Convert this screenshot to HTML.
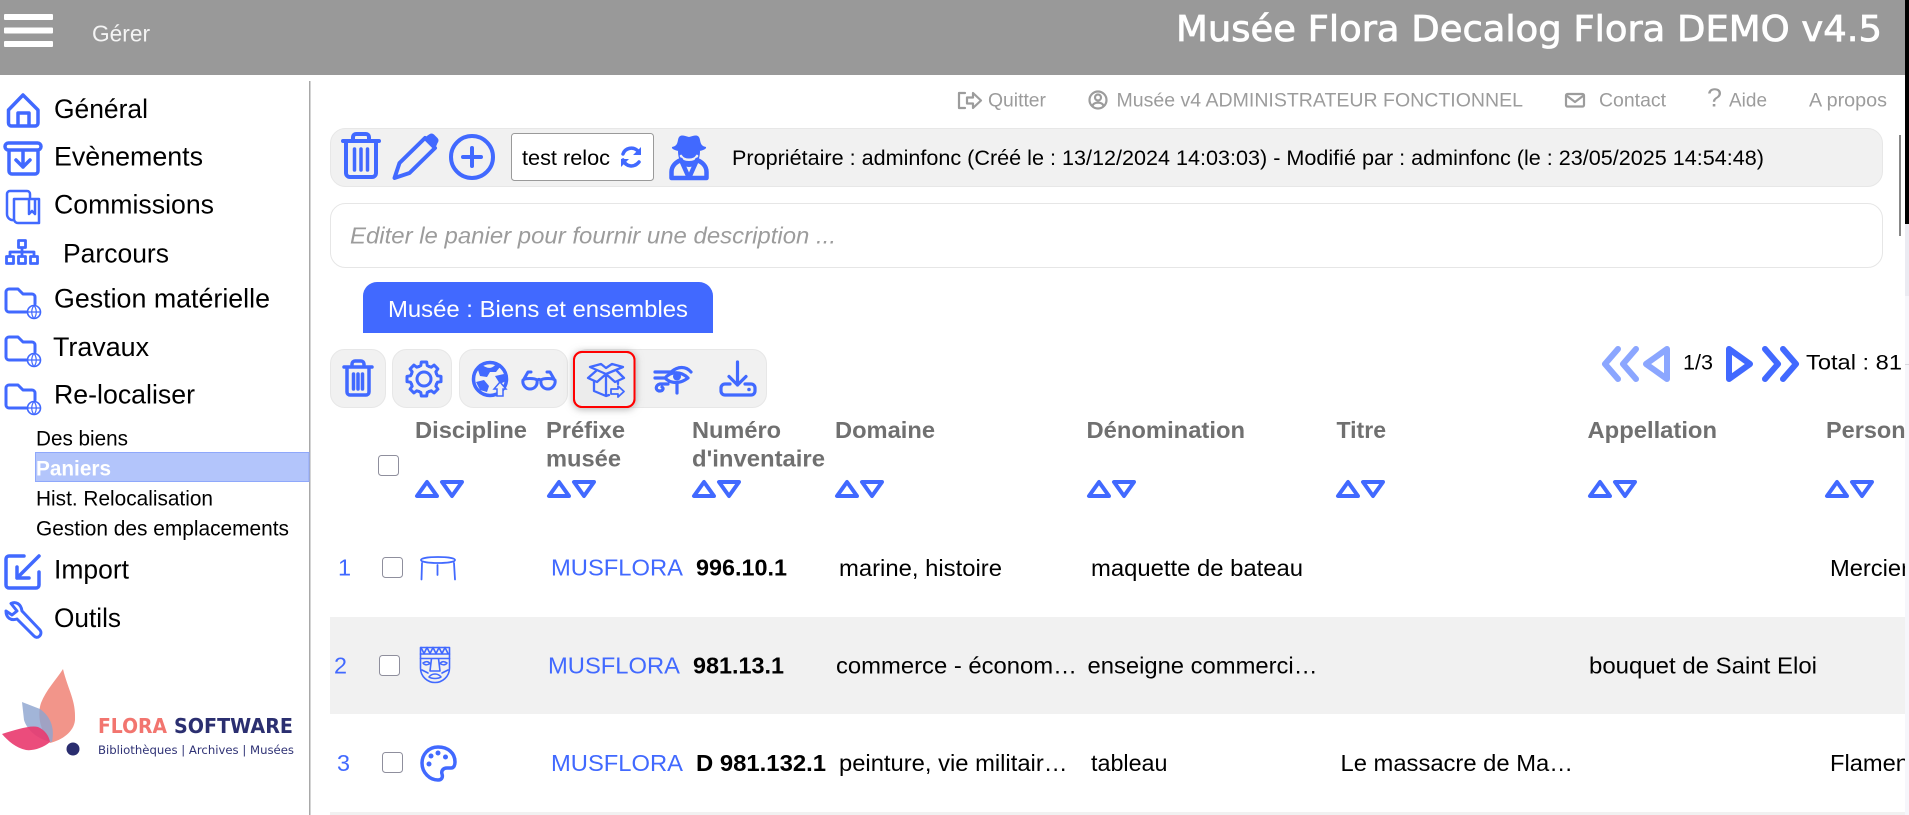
<!DOCTYPE html>
<html lang="fr">
<head>
<meta charset="utf-8">
<title>Musée Flora Decalog Flora DEMO v4.5</title>
<style>
html,body{margin:0;padding:0;width:1909px;height:815px;overflow:hidden;background:#fff}
svg{display:block}
text{font-family:"Liberation Sans",Arial,sans-serif;white-space:pre}
.s{font-size:26.67px;fill:#000}
.m{font-size:21px;fill:#000}
.l{font-size:19.5px;fill:#9c9c9c}
.h{font-size:23.5px;font-weight:bold;fill:#707070}
.c{font-size:23.5px;fill:#000}
.b{font-size:23.5px;fill:#4169ff}
.n{font-size:23.5px;font-weight:bold;fill:#000}
.s,.h,.c,.b,.n{transform:translate(-1px,.6px)}
.i{fill:none;stroke:#4169ff;stroke-linecap:round;stroke-linejoin:round}
.g{fill:none;stroke:#9c9c9c;stroke-linecap:round;stroke-linejoin:round;stroke-width:2.2}
.cb{fill:#fff;stroke:#8f8f9d;stroke-width:1}
</style>
</head>
<body>
<svg xmlns="http://www.w3.org/2000/svg" width="1909" height="815" viewBox="0 0 1909 815">
<defs>
<filter id="sh" x="-30%" y="-30%" width="160%" height="160%"><feDropShadow dx="0" dy="1" stdDeviation="4" flood-color="#888" flood-opacity=".7"/></filter>
<g id="fold" class="i" stroke-width="3">
<path d="M27 312H9a3 3 0 0 1-3-3V292a3 3 0 0 1 3-3H18l5 5H32a3 3 0 0 1 3 3V304"/>
<circle cx="34" cy="312" r="6.500" stroke-width="1.600"/>
<path d="M27.500 312H40.500M34 305.500C31 309 31 315 34 318.500C37 315 37 309 34 305.500" stroke-width="1.200"/>
</g>
<g id="sort" class="i" stroke-width="4">
<path d="M12 2L2 16H22Z"/><path d="M27 2H47L37 16Z"/>
</g>
<g id="tooth"><path d="M-5.170-12.470L-3.200-13.500L-2.700-17H2.700L3.200-13.500L5.170-12.470"/></g>
</defs>

<!-- header -->
<rect x="0" y="0" width="1909" height="75" fill="#999"/>
<rect x="4" y="14" width="49" height="6" rx="1" fill="#fff"/>
<rect x="4" y="27.500" width="49" height="6" rx="1" fill="#fff"/>
<rect x="4" y="41" width="49" height="6" rx="1" fill="#fff"/>
<text x="92" y="41.500" font-size="23" fill="#f4f4f4" textLength="58" lengthAdjust="spacingAndGlyphs">Gérer</text>
<text x="1176" y="41" fill="#fff" stroke="#fff" stroke-width=".8" font-size="36" style="font-family:'DejaVu Sans',sans-serif" textLength="706" lengthAdjust="spacingAndGlyphs">Musée Flora Decalog Flora DEMO v4.5</text>

<!-- sidebar -->
<rect x="309" y="81" width="1.500" height="734" fill="#a8a8a8"/>
<text class="s" x="55" y="117.300" textLength="94" lengthAdjust="spacingAndGlyphs">Général</text>
<text class="s" x="55" y="165" textLength="149" lengthAdjust="spacingAndGlyphs">Evènements</text>
<text class="s" x="55" y="213" textLength="160" lengthAdjust="spacingAndGlyphs">Commissions</text>
<text class="s" x="64" y="262" textLength="106" lengthAdjust="spacingAndGlyphs">Parcours</text>
<text class="s" x="55" y="307" textLength="216" lengthAdjust="spacingAndGlyphs">Gestion matérielle</text>
<text class="s" x="54" y="355.500" textLength="96" lengthAdjust="spacingAndGlyphs">Travaux</text>
<text class="s" x="55" y="403" textLength="141" lengthAdjust="spacingAndGlyphs">Re-localiser</text>
<text class="m" x="36" y="445.700" textLength="92" lengthAdjust="spacingAndGlyphs">Des biens</text>
<rect x="35.500" y="452.500" width="273.500" height="29" fill="#b3c5fb" stroke="#8fa8fb" stroke-width="1"/>
<text class="m" x="36" y="475.700" font-weight="bold" style="fill:#fff" textLength="75" lengthAdjust="spacingAndGlyphs">Paniers</text>
<text class="m" x="36" y="505.700" textLength="177" lengthAdjust="spacingAndGlyphs">Hist. Relocalisation</text>
<text class="m" x="36" y="535.700" textLength="253" lengthAdjust="spacingAndGlyphs">Gestion des emplacements</text>
<text class="s" x="55" y="578" textLength="75" lengthAdjust="spacingAndGlyphs">Import</text>
<text class="s" x="55" y="626.500" textLength="67" lengthAdjust="spacingAndGlyphs">Outils</text>

<!-- sidebar icons -->
<path class="i" stroke-width="3.500" d="M8.500 110L23 95L38 110V123a3 3 0 0 1-3 3H11.500a3 3 0 0 1-3-3ZM18 126V113H29V126"/>
<path class="i" stroke-width="3.500" d="M8.500 143H37.500a2.500 2.500 0 0 1 0 7H8.500a2.500 2.500 0 0 1 0-7ZM9 150V171a3 3 0 0 0 3 3H35a3 3 0 0 0 3-3V150M23 152V167M16 160L23 167L30 160"/>
<path class="i" stroke-width="2.500" d="M14 220a6 6 0 0 1-7-6V194a3 3 0 0 1 3-3H27a3 3 0 0 1 3 3V199M14 199H39V223H18a4 4 0 0 1-4-4ZM29 199V214L32 211L35 214V199"/>
<path class="i" stroke-width="2.800" d="M18.500 240.500H25.500V247.500H18.500ZM22 247.500V252M10 256V252H34V256M6.500 256.500H13.500V263.500H6.500ZM18.500 256.500H25.500V263.500H18.500ZM30.500 256.500H37.500V263.500H30.500ZM22 252V256"/>
<use href="#fold"/>
<use href="#fold" y="48"/>
<use href="#fold" y="96"/>
<path class="i" stroke-width="3.500" d="M24 556H9a3 3 0 0 0-3 3V585a3 3 0 0 0 3 3H36a3 3 0 0 0 3-3V572M39 556L17 578M17 567V578H29"/>
<path class="i" stroke-width="3" d="M11 603.500C16 601 21 604 22 611L40 630C43 634 38 640 34 636L17 619C11 621 6 618 6 611L12 615L17 611Z"/>

<!-- logo -->
<path d="M63 669C68 690 76 700 75 720C74 732 62 740 50 743C40 730 37 715 41 703C46 690 56 680 63 669Z" fill="#f2958a"/>
<path d="M22 702L40 709C50 716 55 727 52 742C38 740 27 730 24 720Z" fill="#8ea5d0" opacity=".82"/>
<path d="M2 734C15 730 30 725 38 727C45 730 49 736 50 742C43 748 33 751 26 750C16 748 8 741 2 734Z" fill="#e9386e" opacity=".9"/>
<circle cx="73" cy="749" r="6.500" fill="#2a2d6f"/>
<text x="98" y="733" font-size="20.500" font-weight="bold" fill="#f2756f" style="font-family:'DejaVu Sans',sans-serif" textLength="69" lengthAdjust="spacingAndGlyphs">FLORA</text>
<text x="174" y="733" font-size="20.500" font-weight="bold" fill="#2b2f70" style="font-family:'DejaVu Sans',sans-serif" textLength="119" lengthAdjust="spacingAndGlyphs">SOFTWARE</text>
<text x="98" y="754" font-size="11.500" fill="#2f3275" style="font-family:'DejaVu Sans',sans-serif" textLength="196" lengthAdjust="spacingAndGlyphs">Bibliothèques | Archives | Musées</text>

<!-- top links -->
<path class="g" d="M965 93H959V108H965M967 97.500H973V93L981 100.500L973 108V103.500H967Z"/>
<text class="l" x="988" y="106.700" textLength="58" lengthAdjust="spacingAndGlyphs">Quitter</text>
<circle class="g" cx="1098" cy="100" r="8.500"/>
<circle class="g" cx="1098" cy="97.500" r="3"/>
<path class="g" d="M1092.500 106C1093.500 101.500 1102.500 101.500 1103.500 106"/>
<text class="l" x="1116.500" y="106.700" textLength="406.500" lengthAdjust="spacingAndGlyphs">Musée v4 ADMINISTRATEUR FONCTIONNEL</text>
<rect class="g" x="1566" y="94" width="18" height="12.500" rx="1.500"/>
<path class="g" d="M1566.500 95.500L1575 102L1583.500 95.500"/>
<text class="l" x="1599" y="106.700" textLength="67" lengthAdjust="spacingAndGlyphs">Contact</text>
<text class="l" x="1707" y="106.700" style="font-size:26px" textLength="15" lengthAdjust="spacingAndGlyphs">?</text>
<text class="l" x="1729" y="106.700" textLength="38" lengthAdjust="spacingAndGlyphs">Aide</text>
<text class="l" x="1809" y="106.700" textLength="78" lengthAdjust="spacingAndGlyphs">A propos</text>

<!-- top toolbar -->
<rect x="330.500" y="128.500" width="1552" height="58" rx="15" fill="#f1f1f1" stroke="#e7e7e7"/>
<path class="i" stroke-width="4" d="M343 141H379M353 140V137a3 3 0 0 1 3-3H366a3 3 0 0 1 3 3V140M346 142V173a4 4 0 0 0 4 4H372a4 4 0 0 0 4-4V142"/>
<path class="i" stroke-width="3.500" d="M354.500 149V170M361 149V170M367.500 149V170"/>
<path class="i" stroke-width="4" d="M394.500 178L399.500 163L425 138L435 148L409.500 173Z"/>
<path d="M424 138L429 134.500a4 4 0 0 1 5 0L437.500 138a4 4 0 0 1 0 5L435 149Z" fill="#4169ff"/>
<circle class="i" stroke-width="4" cx="472" cy="157" r="21"/>
<path class="i" stroke-width="4" d="M472 148V166M463 157H481"/>
<rect x="511.500" y="133.500" width="142" height="47" rx="3" fill="#fff" stroke="#9a9a9a"/>
<text x="522" y="165" font-size="21.300" fill="#000" textLength="88" lengthAdjust="spacingAndGlyphs">test reloc</text>
<path class="i" stroke-width="3.500" d="M623 154C625 148 633 146 638 151M623 160C626 167 634 168 639 162"/>
<path d="M641 147V155H633ZM621 167V159H629Z" fill="#4169ff"/>
<path d="M672 147C676 146 677 145 678 140C679 134 683 135 689 137C695 135 699 134 700 140C701 145 702 146 706 147C707 150 698 152 689 152C680 152 671 150 672 147Z" fill="#4169ff"/>
<path d="M678 151H700C700 161 695 167 689 167C683 167 678 161 678 151Z" fill="#4169ff"/>
<path d="M681 156C684 161 694 161 697 156" fill="none" stroke="#f1f1f1" stroke-width="2.500" stroke-linecap="round"/>
<path class="i" stroke-width="4.500" d="M671.500 178V172C671.500 166 676 162 681 160L689 178ZM706.500 178V172C706.500 166 702 162 697 160L689 178ZM671.500 178H706.500"/>

<!-- description -->
<rect x="330.500" y="203.500" width="1552" height="64" rx="15" fill="#fff" stroke="#e6e6e6"/>
<text x="350" y="243.600" font-size="23" font-style="italic" fill="#9c9c9c" textLength="486" lengthAdjust="spacingAndGlyphs">Editer le panier pour fournir une description ...</text>
<text x="732" y="165" font-size="21.300" fill="#000" textLength="1032" lengthAdjust="spacingAndGlyphs">Propriétaire : adminfonc (Créé le : 13/12/2024 14:03:03) - Modifié par : adminfonc (le : 23/05/2025 14:54:48)</text>

<!-- tab -->
<path d="M363 333V296a14 14 0 0 1 14-14H699a14 14 0 0 1 14 14V333Z" fill="#4169ff"/>
<text x="388" y="317" font-size="23" fill="#fff" textLength="300" lengthAdjust="spacingAndGlyphs">Musée : Biens et ensembles</text>

<!-- action toolbar -->
<rect x="330.500" y="349.500" width="55" height="58" rx="14" fill="#f1f1f1" stroke="#e7e7e7"/>
<rect x="392.500" y="349.500" width="59" height="58" rx="14" fill="#f1f1f1" stroke="#e7e7e7"/>
<rect x="459.500" y="349.500" width="108" height="58" rx="14" fill="#f1f1f1" stroke="#e7e7e7"/>
<rect x="573.500" y="349.500" width="193" height="58" rx="14" fill="#f1f1f1" stroke="#e7e7e7"/>
<rect x="574" y="352" width="60.500" height="55" rx="8" fill="#ececec" stroke="#f00" stroke-width="2" filter="url(#sh)"/>
<rect x="574" y="352" width="60.500" height="55" rx="8" fill="none" stroke="#f00" stroke-width="2"/>

<path class="i" stroke-width="3.500" d="M344 367H372M352 366V364a3 3 0 0 1 3-3H361a3 3 0 0 1 3 3V366M347 368V392a3 3 0 0 0 3 3H366a3 3 0 0 0 3-3V368M353.500 374V389M358 374V389M362.500 374V389"/>
<g class="i" stroke-width="3" transform="translate(424 379)">
<use href="#tooth"/><use href="#tooth" transform="rotate(45)"/><use href="#tooth" transform="rotate(90)"/><use href="#tooth" transform="rotate(135)"/><use href="#tooth" transform="rotate(180)"/><use href="#tooth" transform="rotate(225)"/><use href="#tooth" transform="rotate(270)"/><use href="#tooth" transform="rotate(315)"/>
<circle r="7"/>
</g>
<circle class="i" stroke-width="3.500" cx="490" cy="379" r="16.500"/>
<path d="M482 365C488 369 492 369 496 364L500 367L496 372L490 372L487 377L480 376L478 370ZM476 382L484 380L489 386L487 392L480 390ZM495 376L504 374L506 381L500 384Z" fill="#4169ff"/>
<path d="M497 396V389H494L500 382L506 389H503V396Z" fill="#f1f1f1" stroke="#4169ff" stroke-width="1.500"/>
<path class="i" stroke-width="3" d="M523 380C525 378 535 378 537 380C538 386 534 389 530 389C526 389 522 385 523 380ZM541 380C543 378 553 378 555 380C556 385 552 389 548 389C544 389 540 386 541 380ZM537 380.500C538 379 540 379 541 380.500M524 379L528 372H531M554 379L550 372H547"/>

<path class="i" stroke-width="2.300" d="M606 374L590 367L601 364L606 368L612 364L623 367L606 374ZM606 374L597 382L588 378L596 371M606 374L615 382L624 378L617 371M594 381V391L606 396L609 395M618 381V384M606 376V396"/>
<path d="M611 389H618V386L624 391.500L618 397V394H611Z" fill="#ececec" stroke="#4169ff" stroke-width="1.800" stroke-linejoin="round"/>

<path class="i" stroke-width="3.200" d="M655 372H671C678 366 686 366 691 372M655 378H665C671 371 681 371 688 378C680 384 671 384 665 378M668 384H660C655 385 655 391 660 391C663 391 664 388 662 387M677 384V393"/>
<circle cx="677" cy="376.500" r="4" fill="#4169ff"/>

<path class="i" stroke-width="3.200" d="M737.500 362V385M729 376.500L737.500 385L746 376.500M730 384H725a4 4 0 0 0-4 4V391a4 4 0 0 0 4 4H751a4 4 0 0 0 4-4V388a4 4 0 0 0-4-4H745"/>
<circle cx="749" cy="389.500" r="1.800" fill="#4169ff"/>

<!-- pagination -->
<g class="i" stroke-width="6" style="stroke:#8ba6ff">
<path d="M1618 349L1605 364L1618 379"/><path d="M1636 349L1623 364L1636 379"/>
<path d="M1667 349V379L1646 364Z"/>
</g>
<text x="1683" y="369.300" font-size="21.300" fill="#000" textLength="30" lengthAdjust="spacingAndGlyphs">1/3</text>
<g class="i" stroke-width="6">
<path d="M1729 349V379L1750 364Z"/>
<path d="M1765 349L1778 364L1765 379"/><path d="M1783 349L1796 364L1783 379"/>
</g>
<text x="1806" y="369.300" font-size="21.300" fill="#000" textLength="96" lengthAdjust="spacingAndGlyphs">Total : 81</text>

<!-- table header -->
<rect class="cb" x="378.500" y="455.500" width="20" height="20" rx="3"/>
<text class="h" x="416" y="437.500" textLength="112" lengthAdjust="spacingAndGlyphs">Discipline</text>
<text class="h" x="547" y="437.500" textLength="79" lengthAdjust="spacingAndGlyphs">Préfixe</text>
<text class="h" x="547" y="466" textLength="75" lengthAdjust="spacingAndGlyphs">musée</text>
<text class="h" x="693" y="437.500" textLength="89" lengthAdjust="spacingAndGlyphs">Numéro</text>
<text class="h" x="693" y="466" textLength="133" lengthAdjust="spacingAndGlyphs">d'inventaire</text>
<text class="h" x="836" y="437.500" textLength="100" lengthAdjust="spacingAndGlyphs">Domaine</text>
<text class="h" x="1087.500" y="437.500" textLength="158.500" lengthAdjust="spacingAndGlyphs">Dénomination</text>
<text class="h" x="1337.500" y="437.500" textLength="49.500" lengthAdjust="spacingAndGlyphs">Titre</text>
<text class="h" x="1588.500" y="437.500" textLength="129.500" lengthAdjust="spacingAndGlyphs">Appellation</text>
<text class="h" x="1827" y="437.500" textLength="107" lengthAdjust="spacingAndGlyphs">Personne</text>
<use href="#sort" x="415" y="480"/>
<use href="#sort" x="547" y="480"/>
<use href="#sort" x="692" y="480"/>
<use href="#sort" x="835" y="480"/>
<use href="#sort" x="1087" y="480"/>
<use href="#sort" x="1336" y="480"/>
<use href="#sort" x="1588" y="480"/>
<use href="#sort" x="1825" y="480"/>

<!-- rows -->
<rect x="330" y="617" width="1575" height="97" fill="#f1f1f1"/>
<rect x="330" y="812" width="1575" height="3" fill="#f1f1f1"/>

<text class="b" x="339" y="575">1</text>
<rect class="cb" x="382.500" y="557.500" width="20" height="20" rx="3"/>
<path class="i" stroke-width="1.800" d="M421 560C421 556 455 556 455 560C455 564 421 564 421 560ZM422 563L421.500 579.500M454 563L455 579.500M437.500 565V575"/>
<text class="b" x="552" y="575" textLength="132" lengthAdjust="spacingAndGlyphs">MUSFLORA</text>
<text class="n" x="697" y="575" textLength="91" lengthAdjust="spacingAndGlyphs">996.10.1</text>
<text class="c" x="840" y="575.500" textLength="163" lengthAdjust="spacingAndGlyphs">marine, histoire</text>
<text class="c" x="1092" y="575.500" textLength="212" lengthAdjust="spacingAndGlyphs">maquette de bateau</text>
<text class="c" x="1831" y="575.500" textLength="79" lengthAdjust="spacingAndGlyphs">Mercier</text>

<text class="b" x="335" y="673" textLength="13" lengthAdjust="spacingAndGlyphs">2</text>
<rect class="cb" x="379.500" y="655.500" width="20" height="20" rx="3"/>
<g class="i" stroke-width="1.600">
<path d="M420.500 647.500H449.500V668C449.500 677 442 682.500 435 682.500C428 682.500 420.500 677 420.500 668Z"/>
<path d="M420.500 654H449.500M420.500 658.500H449.500M421 647.500L424 653.500L427 647.500L430 653.500L433 647.500L436 653.500L439 647.500L442 653.500L445 647.500L448 653.500M431.500 658.500L430 671H440L438.500 658.500M423 663C426 661 428 661 430 663.500C427 665.500 425 665.500 423 663ZM447 663C444 661 442 661 440 663.500C443 665.500 445 665.500 447 663ZM429 677C432 673 438 673 441 677C438 679 432 679 429 677ZM422 670L428 673M448 670L442 673"/>
</g>
<text class="b" x="549" y="673" textLength="132" lengthAdjust="spacingAndGlyphs">MUSFLORA</text>
<text class="n" x="694" y="673" textLength="91" lengthAdjust="spacingAndGlyphs">981.13.1</text>
<text class="c" x="837" y="673" textLength="241" lengthAdjust="spacingAndGlyphs">commerce - économ…</text>
<text class="c" x="1088.500" y="673" textLength="230" lengthAdjust="spacingAndGlyphs">enseigne commerci…</text>
<text class="c" x="1590" y="673" textLength="228" lengthAdjust="spacingAndGlyphs">bouquet de Saint Eloi</text>

<text class="b" x="338" y="770.500" textLength="13" lengthAdjust="spacingAndGlyphs">3</text>
<rect class="cb" x="382.500" y="752.500" width="20" height="20" rx="3"/>
<path class="i" stroke-width="3.500" d="M438 747C428 747 422 755 422 763C422 773 430 780 438 780C442 780 443 777 442 774C441 771 443 768 447 768H451C454 768 455 765 455 762C455 753 448 747 438 747Z"/>
<circle cx="429" cy="764" r="2.500" fill="#4169ff"/><circle cx="431" cy="756" r="2.500" fill="#4169ff"/><circle cx="438" cy="753" r="2.500" fill="#4169ff"/><circle cx="445.500" cy="757" r="2.500" fill="#4169ff"/>
<text class="b" x="552" y="770.500" textLength="132" lengthAdjust="spacingAndGlyphs">MUSFLORA</text>
<text class="n" x="697" y="770.500" textLength="130" lengthAdjust="spacingAndGlyphs">D 981.132.1</text>
<text class="c" x="840" y="770.500" textLength="228.500" lengthAdjust="spacingAndGlyphs">peinture, vie militair…</text>
<text class="c" x="1092" y="770.500" textLength="76.500" lengthAdjust="spacingAndGlyphs">tableau</text>
<text class="c" x="1341.500" y="770.500" textLength="232.500" lengthAdjust="spacingAndGlyphs">Le massacre de Ma…</text>
<text class="c" x="1831" y="770.500" textLength="79" lengthAdjust="spacingAndGlyphs">Flamen</text>

<!-- inner scrollbar + right strip -->
<rect x="1899" y="135" width="2" height="101" fill="#888"/>
<rect x="1905" y="296" width="4" height="519" fill="#f6f6fb"/>
<rect x="1905" y="224" width="4" height="72" fill="#ebebf2"/>
<rect x="1905" y="0" width="4" height="224" fill="#000"/>
<rect x="1905" y="364" width="4" height="1" fill="#d8d8de"/>
</svg>
</body>
</html>
